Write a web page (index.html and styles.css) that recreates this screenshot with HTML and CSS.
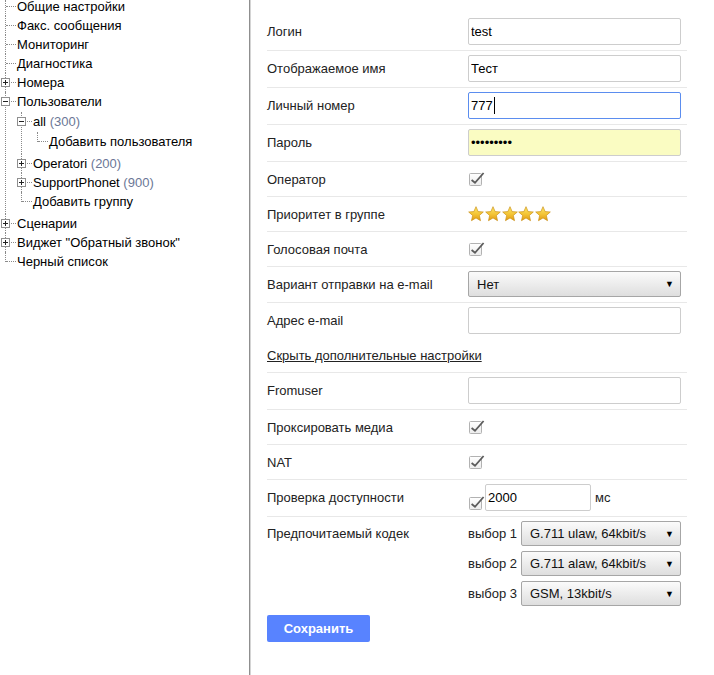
FILE: index.html
```html
<!DOCTYPE html>
<html lang="ru">
<head>
<meta charset="utf-8">
<title>Пользователи</title>
<link rel="stylesheet" href="styles.css">
</head>
<body>
<svg class="defs" width="0" height="0" aria-hidden="true">
  <defs>
    <linearGradient id="starg" x1="0" y1="0" x2="0" y2="1">
      <stop offset="0" stop-color="#fde86a"/>
      <stop offset="0.55" stop-color="#f3c334"/>
      <stop offset="1" stop-color="#e09a12"/>
    </linearGradient>
    <linearGradient id="ckg" x1="0" y1="0" x2="0" y2="1">
      <stop offset="0" stop-color="#ffffff"/>
      <stop offset="1" stop-color="#ececec"/>
    </linearGradient>
    <symbol id="star" viewBox="-8.3 -8.4 16.6 16">
      <polygon points="0,-8 2.2,-2.9 7.6,-2.5 3.5,1.1 4.7,6.5 0,3.7 -4.7,6.5 -3.5,1.1 -7.6,-2.5 -2.2,-2.9" fill="url(#starg)" stroke="#c98f16" stroke-width="0.7" stroke-linejoin="round"/>
    </symbol>
    <symbol id="check" viewBox="0 0 16 14">
      <rect x="0.5" y="1.5" width="12" height="12" rx="1" fill="url(#ckg)" stroke="#b2b2b2"/>
      <path d="M2.6 8 L6 10.8 L14.6 1" fill="none" stroke="#5c5c5c" stroke-width="1.8"/>
    </symbol>
    <symbol id="plus" viewBox="0 0 9 9">
      <rect x="0.5" y="0.5" width="8" height="8" fill="#fff" stroke="#8f8f8f"/>
      <path d="M2 4.5h5M4.5 2v5" stroke="#222"/>
    </symbol>
    <symbol id="minus" viewBox="0 0 9 9">
      <rect x="0.5" y="0.5" width="8" height="8" fill="#fff" stroke="#8f8f8f"/>
      <path d="M2 4.5h5" stroke="#222"/>
    </symbol>
  </defs>
</svg>

<div class="layout">
  <aside class="sidebar">
    <ul class="tree">
      <li><div class="node"><span class="gut"></span><span class="txt">Общие настройки</span></div></li>
      <li><div class="node"><span class="gut"></span><span class="txt">Факс. сообщения</span></div></li>
      <li><div class="node"><span class="gut"></span><span class="txt">Мониторинг</span></div></li>
      <li><div class="node"><span class="gut"></span><span class="txt">Диагностика</span></div></li>
      <li><div class="node"><span class="gut"><svg class="exp"><use href="#plus"/></svg></span><span class="txt">Номера</span></div></li>
      <li>
        <div class="node"><span class="gut"><svg class="exp"><use href="#minus"/></svg></span><span class="txt">Пользователи</span></div>
        <ul>
          <li>
            <div class="node"><span class="gut"><svg class="exp"><use href="#minus"/></svg></span><span class="txt">all <span class="cnt">(300)</span></span></div>
            <ul>
              <li><div class="node"><span class="gut"></span><span class="txt">Добавить пользователя</span></div></li>
            </ul>
          </li>
          <li><div class="node"><span class="gut"><svg class="exp"><use href="#plus"/></svg></span><span class="txt">Operatori <span class="cnt">(200)</span></span></div></li>
          <li><div class="node"><span class="gut"><svg class="exp"><use href="#plus"/></svg></span><span class="txt">SupportPhonet <span class="cnt">(900)</span></span></div></li>
          <li><div class="node"><span class="gut"></span><span class="txt">Добавить группу</span></div></li>
        </ul>
      </li>
      <li><div class="node"><span class="gut"><svg class="exp"><use href="#plus"/></svg></span><span class="txt">Сценарии</span></div></li>
      <li><div class="node"><span class="gut"><svg class="exp"><use href="#plus"/></svg></span><span class="txt">Виджет "Обратный звонок"</span></div></li>
      <li><div class="node"><span class="gut"></span><span class="txt">Черный список</span></div></li>
    </ul>
  </aside>

  <main class="main">
    <form class="form">
      <div class="row in"><label class="lbl">Логин</label><div class="ctl"><input class="field" type="text" value="test"></div></div>
      <div class="row in"><label class="lbl">Отображаемое имя</label><div class="ctl"><input class="field" type="text" value="Тест"></div></div>
      <div class="row in"><label class="lbl">Личный номер</label><div class="ctl"><div class="field focus"><span>777</span><span class="caret"></span></div></div></div>
      <div class="row in"><label class="lbl">Пароль</label><div class="ctl"><input class="field auto" type="password" value="123456789"></div></div>
      <div class="row ck"><label class="lbl">Оператор</label><div class="ctl"><svg class="cb"><use href="#check"/></svg></div></div>
      <div class="row ck"><label class="lbl">Приоритет в группе</label>
        <div class="ctl stars">
          <svg class="star"><use href="#star"/></svg><svg class="star"><use href="#star"/></svg><svg class="star"><use href="#star"/></svg><svg class="star"><use href="#star"/></svg><svg class="star"><use href="#star"/></svg>
        </div>
      </div>
      <div class="row ck"><label class="lbl">Голосовая почта</label><div class="ctl"><svg class="cb"><use href="#check"/></svg></div></div>
      <div class="row in"><label class="lbl">Вариант отправки на e-mail</label>
        <div class="ctl"><div class="sel big"><select><option>Нет</option></select><span class="arrow">▼</span></div></div>
      </div>
      <div class="row in plain"><label class="lbl">Адрес e-mail</label><div class="ctl"><input class="field" type="text" value=""></div></div>
      <div class="row ck"><a class="more" href="#">Скрыть дополнительные настройки</a></div>
      <div class="row in"><label class="lbl">Fromuser</label><div class="ctl"><input class="field" type="text" value=""></div></div>
      <div class="row ck"><label class="lbl">Проксировать медиа</label><div class="ctl"><svg class="cb"><use href="#check"/></svg></div></div>
      <div class="row ck"><label class="lbl">NAT</label><div class="ctl"><svg class="cb"><use href="#check"/></svg></div></div>
      <div class="row in"><label class="lbl">Проверка доступности</label>
        <div class="ctl qual"><svg class="cb low"><use href="#check"/></svg><input class="field short" type="text" value="2000"><span class="unit">мс</span></div>
      </div>
      <div class="row codec"><label class="lbl tall">Предпочитаемый кодек</label>
        <div class="ctl codecs">
          <div class="choice"><span>выбор 1</span><div class="sel"><select><option>G.711 ulaw, 64kbit/s</option></select><span class="arrow">▼</span></div></div>
          <div class="choice"><span>выбор 2</span><div class="sel"><select><option>G.711 alaw, 64kbit/s</option></select><span class="arrow">▼</span></div></div>
          <div class="choice"><span>выбор 3</span><div class="sel"><select><option>GSM, 13kbit/s</option></select><span class="arrow">▼</span></div></div>
        </div>
      </div>
      <button class="save" type="button">Сохранить</button>
    </form>
  </main>
</div>
</body>
</html>
```

FILE: styles.css
```css
* { box-sizing: border-box; }
html, body { margin: 0; padding: 0; background: #fff; }
body {
  font-family: "Liberation Sans", Arial, sans-serif;
  font-size: 13px;
  color: #222;
  overflow: hidden;
}
.defs { position: absolute; width: 0; height: 0; }

.layout { display: flex; height: 100vh; }

/* ---------- sidebar tree ---------- */
.sidebar {
  width: 250px;
  flex: none;
  border-right: 1px solid #8f8f8f;
  overflow: hidden;
}
.tree, .tree ul { list-style: none; margin: 0; padding: 0; }
.tree { margin-top: -3px; color: #000; }
.tree ul { padding: 1px 0 3px 16px; }
.tree li { position: relative; }
.tree li::after {
  content: "";
  position: absolute;
  left: 5px;
  top: 0;
  bottom: 0;
  border-left: 1px dotted #8a8a8a;
}
.tree li:last-child::after { bottom: auto; height: 10px; }
.tree > li:first-child::after { top: 3px; }
.node {
  position: relative;
  display: flex;
  align-items: center;
  height: 19px;
  line-height: 19px;
  white-space: nowrap;
}
.node::before {
  content: "";
  position: absolute;
  left: 6px;
  top: 9px;
  width: 10px;
  border-top: 1px dotted #8a8a8a;
}
.gut {
  position: relative;
  z-index: 1;
  width: 17px;
  height: 19px;
  flex: none;
  display: flex;
  align-items: center;
}
.exp { width: 9px; height: 9px; margin-left: 1px; display: block; }
.cnt { color: #6b7796; }

/* ---------- main form ---------- */
.main {
  flex: 1;
  border-left: 1px solid #d4d4d4;
  padding: 14px 0 0 16px;
}
.form { width: 420px; }
.row {
  display: flex;
  align-items: center;
  border-bottom: 1px solid #e8e8e8;
}
.row.in { padding: 4px 0 5px; }
.row.ck { height: 35px; }
.row.plain { border-bottom: none; padding: 4px 0 4px; }
.lbl { width: 201px; flex: none; }
.ctl { width: 213px; flex: none; display: flex; align-items: center; }

.field {
  width: 213px;
  height: 27px;
  border: 1px solid #cdcdcd;
  border-radius: 2px;
  padding: 0 2px;
  font: 13px "Liberation Sans", Arial, sans-serif;
  color: #000;
  background: #fff;
  outline: none;
}
div.field { display: flex; align-items: center; }
.field.focus { border-color: #5b8def; }
.caret { width: 1px; height: 17px; background: #000; margin-left: 1px; }
.field.auto { background: #fafcc2; letter-spacing: 0; }

.cb { width: 16px; height: 14px; margin-left: 1px; display: block; overflow: visible; }
.stars { gap: 0.75px; }
.star { width: 16px; height: 16px; display: block; }

.sel { position: relative; width: 213px; }
.sel select {
  -webkit-appearance: none;
  appearance: none;
  width: 100%;
  height: 25px;
  border: 1px solid #a6a6a6;
  border-radius: 2px;
  background: linear-gradient(#fbfbfb, #dedede);
  font: 13px "Liberation Sans", Arial, sans-serif;
  color: #111;
  padding: 0 20px 0 8px;
  outline: none;
}
.sel.big select { height: 26px; }
.arrow {
  position: absolute;
  right: 7px;
  top: 0;
  bottom: 0;
  display: flex;
  align-items: center;
  font-size: 9px;
  color: #000;
  pointer-events: none;
}

.more { color: #222; text-decoration: underline; }

.qual { align-items: flex-end; }
.cb.low { margin-bottom: 1px; }
.field.short { width: 106px; margin-left: 0; }
.unit { margin-left: 4px; align-self: center; }

.row.codec { align-items: flex-start; padding-top: 4px; border-bottom: none; }
.lbl.tall { line-height: 25px; }
.codecs { flex-direction: column; align-items: stretch; gap: 5px; }
.choice { display: flex; align-items: center; justify-content: space-between; }
.choice .sel { width: 160px; }

.save {
  margin-top: 9px;
  width: 103px;
  height: 27px;
  border: none;
  border-radius: 2px;
  background: #5883ff;
  color: #fff;
  font: bold 13px "Liberation Sans", Arial, sans-serif;
  cursor: pointer;
}
```
